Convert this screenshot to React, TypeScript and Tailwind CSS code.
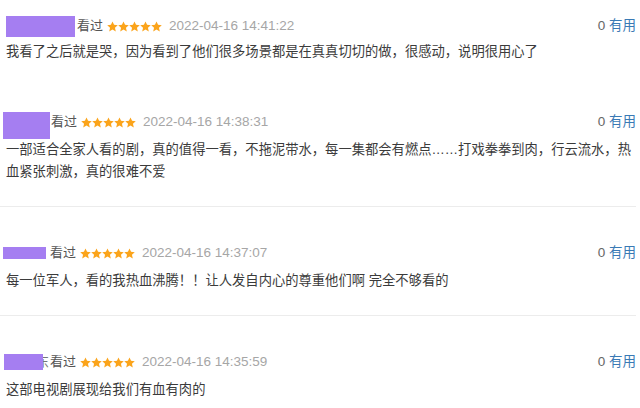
const reviews = [
  {
    time: "2022-04-16 14:41:22",
    text: "我看了之后就是哭，因为看到了他们很多场景都是在真真切切的做，很感动，说明很用心了",
    mask: { w: 69, h: 21, top: 1, left: 3, gap: 2 },
    pad: "pt-[15px] pb-[24px]",
    border: false,
    bodyGap: "mt-[4px]",
  },
  {
    time: "2022-04-16 14:38:31",
    text: "一部适合全家人看的剧，真的值得一看，不拖泥带水，每一集都会有燃点……打戏拳拳到肉，行云流水，热血紧张刺激，真的很难不爱",
    mask: { w: 47, h: 27, top: 1, left: 0, gap: 1 },
    pad: "pt-[24px] pb-[23px]",
    border: true,
    bodyGap: "mt-[6px]",
  },
  {
    time: "2022-04-16 14:37:07",
    text: "每一位军人，看的我热血沸腾！！让人发自内心的尊重他们啊 完全不够看的",
    mask: { w: 43, h: 12, top: 5, left: 0, gap: 4 },
    pad: "pt-[35px] pb-[23px]",
    border: true,
    bodyGap: "mt-[6px]",
  },
  {
    time: "2022-04-16 14:35:59",
    text: "这部电视剧展现给我们有血有肉的",
    mask: { w: 39, h: 16, top: 3, left: 1, gap: 1 },
    pad: "pt-[35px] pb-[8px]",
    border: false,
    bodyGap: "mt-[6px]",
    tail: true,
  },
];

function Stars() {
  return (
    <span className="flex items-center ml-[4px]">
      {[0, 1, 2, 3, 4].map((i) => (
        <svg key={i} width="11" height="11" viewBox="1 1.2 22 21">
          <path
            d="M12 1.5l3.1 6.9 7.4.7-5.6 5 1.7 7.4L12 17.6l-6.6 3.9 1.7-7.4-5.6-5 7.4-.7z"
            fill="#fba41b"
          />
        </svg>
      ))}
    </span>
  );
}

export default function App() {
  return (
    <div
      className="w-[640px] h-[408px] overflow-hidden bg-white"
      style={{ fontFamily: '"Liberation Sans", "Noto Sans CJK SC", sans-serif' }}
    >
      {reviews.map((r, idx) => (
        <div key={idx}>
          <div className={r.pad}>
            <div className="flex items-center h-[22px] pl-[3px] pr-[4px] text-[13px]">
              <span
                className="relative self-start shrink-0"
                style={{
                  marginLeft: r.mask.left,
                  marginRight: r.mask.gap,
                  width: r.mask.w + (r.tail ? 6 : 0),
                  height: 22,
                }}
              >
                {r.tail && (
                  <span className="absolute right-0 top-0 h-[22px] leading-[22px] w-[14px] overflow-hidden text-[#777] text-[13px] text-right whitespace-nowrap">
                    东
                  </span>
                )}
                <span
                  className="absolute left-0 bg-[#a57ef1]"
                  style={{ top: r.mask.top, width: r.mask.w, height: r.mask.h }}
                />
              </span>
              <span className="text-[#555]">看过</span>
              <Stars />
              <span className="ml-[7px] text-[13.5px] text-[#a6a6a6]">{r.time}</span>
              <span className="ml-auto text-[13.5px]">
                <span className="text-[#666]">0 </span>
                <span className="text-[#3a7ab5]">有用</span>
              </span>
            </div>
            <p
              className={`${r.bodyGap} pl-[6px] pr-[4px] text-[13.3px] leading-[22px] text-[#3b3b3b]`}
            >
              {r.text}
            </p>
          </div>
          {r.border && <div className="h-px bg-[#ececec] mr-[4px]" />}
        </div>
      ))}
    </div>
  );
}
